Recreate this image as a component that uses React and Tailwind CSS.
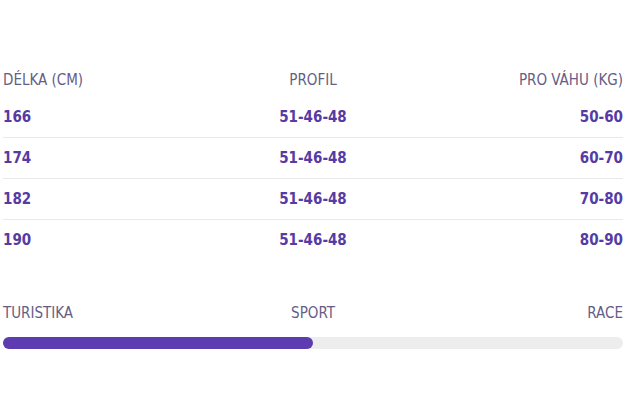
const rows = [
  { len: "166", profile: "51-46-48", weight: "50-60" },
  { len: "174", profile: "51-46-48", weight: "60-70" },
  { len: "182", profile: "51-46-48", weight: "70-80" },
  { len: "190", profile: "51-46-48", weight: "80-90" },
];

export default function App() {
  return (
    <div className="h-[420px] w-[630px] bg-white pl-[3px] pt-[68px] font-['DejaVu_Sans_Condensed','Roboto',sans-serif]">
      <div className="w-[620px]">
        {/* size table */}
        <div className="grid h-[24px] grid-cols-3 items-center text-[15px] uppercase text-[#655d85]">
          <div>Délka (cm)</div>
          <div className="text-center">Profil</div>
          <div className="text-right">Pro váhu (kg)</div>
        </div>
        <div className="mt-[5px]">
          {rows.map((r, i) => (
            <div
              key={r.len}
              className={`grid h-[41px] grid-cols-3 items-center text-[15px] font-bold text-[#553ba3] ${i < rows.length - 1 ? "border-b border-[#e9e9e9]" : ""}`}
            >
              <div>{r.len}</div>
              <div className="text-center">{r.profile}</div>
              <div className="text-right">{r.weight}</div>
            </div>
          ))}
        </div>

        {/* riding style */}
        <div className="mt-[40px] grid h-[24px] grid-cols-3 items-center text-[15px] uppercase text-[#655d85]">
          <span>Turistika</span>
          <span className="text-center">Sport</span>
          <span className="text-right">Race</span>
        </div>
        <div className="mt-[12px] h-[12px] w-full rounded-full bg-[#ededed]">
          <div className="h-full w-1/2 rounded-full bg-[#5d3bb1]" />
        </div>
      </div>
    </div>
  );
}
